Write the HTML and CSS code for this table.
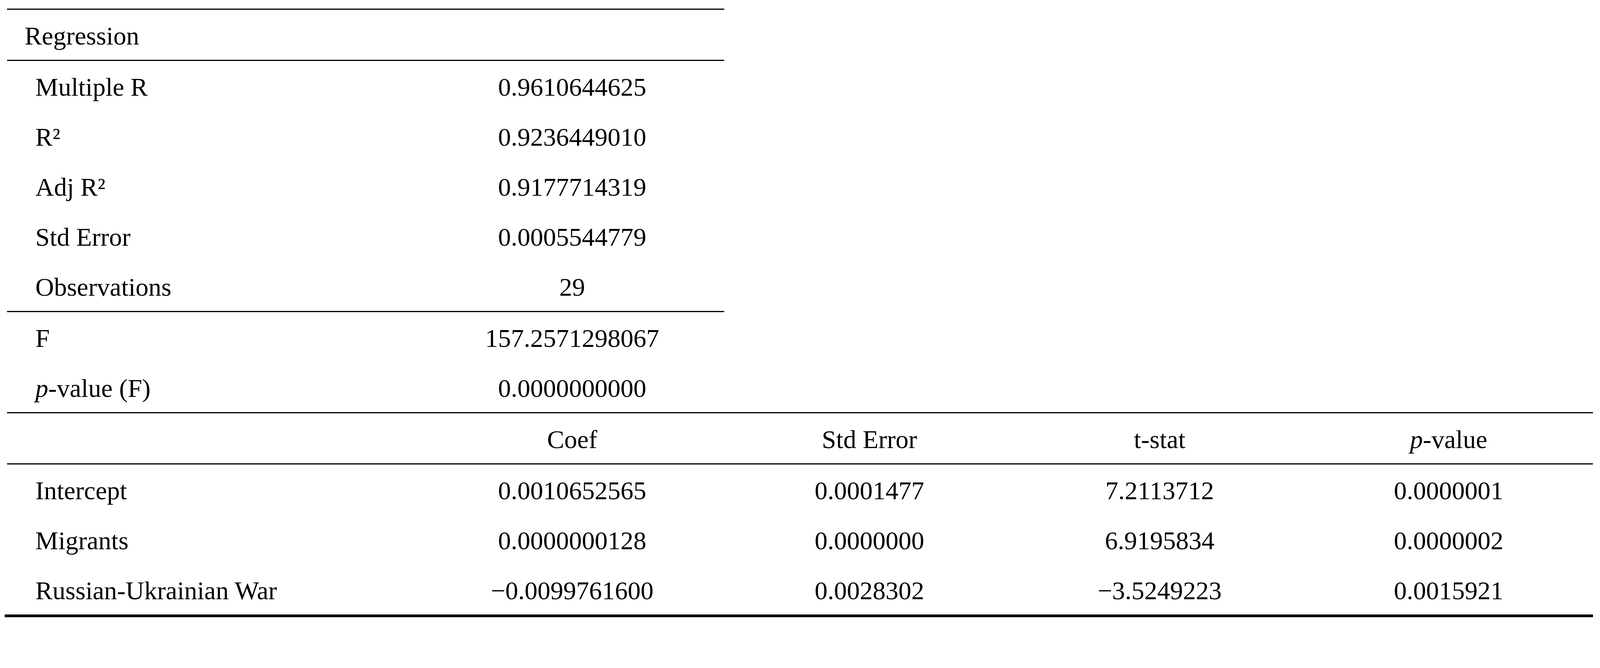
FILE: index.html
```html
<!DOCTYPE html>
<html lang="en">
<head>
<meta charset="utf-8">
<title>Regression results</title>
<link rel="stylesheet" href="styles.css">
</head>
<body>
<div class="report">
  <div class="summary">
    <div class="row head"><div class="cell label top">Regression</div><div class="cell"></div></div>
    <div class="group">
      <div class="row"><div class="cell label">Multiple R</div><div class="cell num">0.9610644625</div></div>
      <div class="row"><div class="cell label">R²</div><div class="cell num">0.9236449010</div></div>
      <div class="row"><div class="cell label">Adj R²</div><div class="cell num">0.9177714319</div></div>
      <div class="row"><div class="cell label">Std Error</div><div class="cell num">0.0005544779</div></div>
      <div class="row"><div class="cell label">Observations</div><div class="cell num">29</div></div>
    </div>
    <div class="group">
      <div class="row"><div class="cell label">F</div><div class="cell num">157.2571298067</div></div>
      <div class="row"><div class="cell label"><i>p</i>-value (F)</div><div class="cell num">0.0000000000</div></div>
    </div>
  </div>
  <div class="coefs">
    <div class="row head">
      <div class="cell label"></div>
      <div class="cell num">Coef</div>
      <div class="cell num">Std Error</div>
      <div class="cell num">t-stat</div>
      <div class="cell num"><i>p</i>-value</div>
    </div>
    <div class="group">
      <div class="row">
        <div class="cell label">Intercept</div>
        <div class="cell num">0.0010652565</div>
        <div class="cell num">0.0001477</div>
        <div class="cell num">7.2113712</div>
        <div class="cell num">0.0000001</div>
      </div>
      <div class="row">
        <div class="cell label">Migrants</div>
        <div class="cell num">0.0000000128</div>
        <div class="cell num">0.0000000</div>
        <div class="cell num">6.9195834</div>
        <div class="cell num">0.0000002</div>
      </div>
      <div class="row">
        <div class="cell label">Russian-Ukrainian War</div>
        <div class="cell num">−0.0099761600</div>
        <div class="cell num">0.0028302</div>
        <div class="cell num">−3.5249223</div>
        <div class="cell num">0.0015921</div>
      </div>
    </div>
  </div>
  <div class="rule-bottom"></div>
</div>
</body>
</html>
```
FILE: styles.css
```css
html, body {
  background: #ffffff;
}
body {
  margin: 0;
  padding: 21.5px 0 0 18px;
  font-family: "Liberation Serif", "Times New Roman", serif;
  font-size: 66px;
  color: #000000;
}
.report {
  width: 4059.5px;
}
.summary {
  width: 1835.5px;
  border-top: 3.8px solid #000;
}
.summary .row {
  display: grid;
  grid-template-columns: 1058px 777.5px;
}
.coefs {
  border-top: 3.8px solid #000;
}
.coefs .row {
  display: grid;
  grid-template-columns: 1058px 777.5px 744.5px 741.5px 738px;
}
.group {
  border-top: 3.8px solid #000;
}
.row {
  height: 128px;
  box-sizing: border-box;
  padding-top: 6.6px;
}
.cell {
  line-height: 121.4px;
  white-space: nowrap;
}
.label {
  padding-left: 72.5px;
}
.label.top {
  padding-left: 45px;
}
.num {
  text-align: center;
}
.rule-bottom {
  height: 7.6px;
  background: #000;
  margin-left: -5.6px;
  width: 4065.1px;
}
```
